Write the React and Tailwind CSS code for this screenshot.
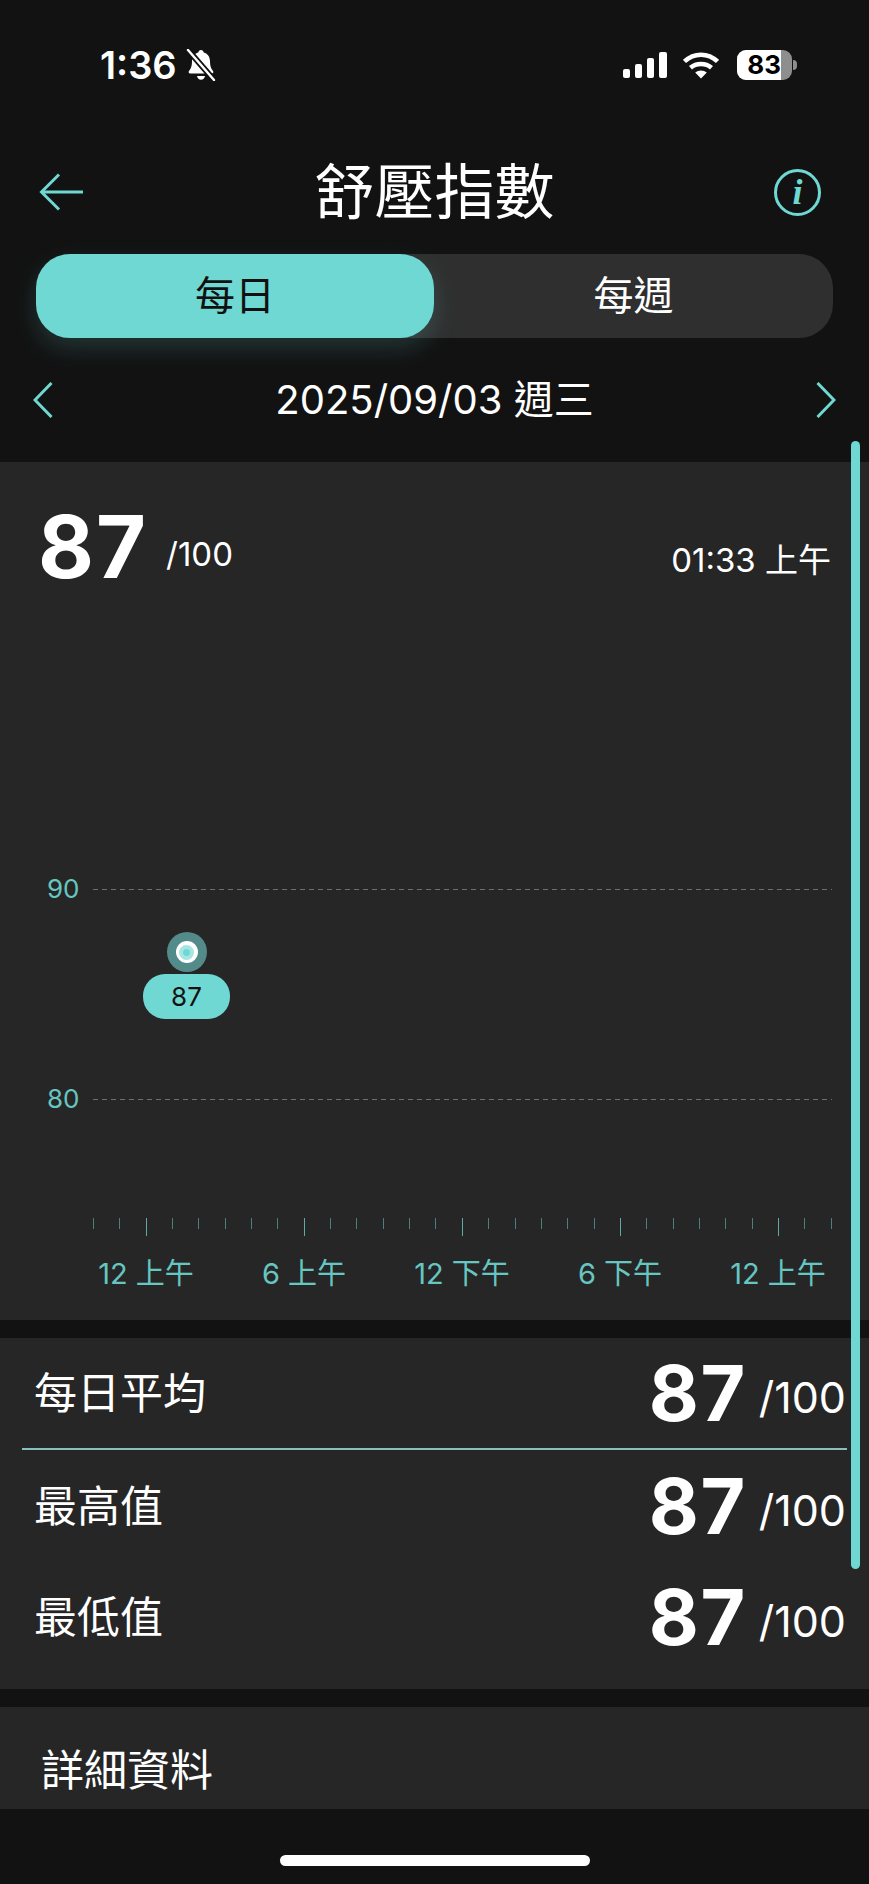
import React from "react";

const cjk = "font-['Inter','Noto_Sans_CJK_TC',sans-serif]";

// 29 ticks along the day axis, every sixth one is longer
const ticks = Array.from({ length: 29 }, (_, i) => i);
const hours = ["12 上午", "6 上午", "12 下午", "6 下午", "12 上午"];

const StatusBar = () => (
  <div className="h-[130px] flex items-center justify-between pl-[100px] pr-[72px] text-white">
    <div className="flex items-center gap-[9px]">
      <span className="text-[38px] font-semibold leading-none">1:36</span>
      <svg width="30" height="32" viewBox="0 0 30 32" fill="none">
        <path
          d="M15 1c1.5 0 2.5 1 2.7 2.4C22 4.600 24 8 24 12.500c0 4 .8 7 3 9.500.8 1 .2 2.500-1.200 2.500H4.200C2.800 24.500 2.200 23 3 22c2.200-2.500 3-5.500 3-9.500C6 8 8 4.600 12.300 3.400 12.500 2 13.500 1 15 1z"
          fill="#fff"
        />
        <path d="M11 27h8c-.4 2.300-2 3.800-4 3.800s-3.600-1.500-4-3.800z" fill="#fff" />
        <path d="M2 1l26 30" stroke="#121212" strokeWidth="6" />
        <path d="M2 1l26 30" stroke="#fff" strokeWidth="2.400" strokeLinecap="round" />
      </svg>
    </div>
    <div className="flex items-center gap-[16px]">
      <svg width="44" height="26" viewBox="0 0 44 26" fill="#fff">
        <rect x="0" y="17" width="7" height="9" rx="2" />
        <rect x="12" y="12" width="7" height="14" rx="2" />
        <rect x="24" y="6" width="7" height="20" rx="2" />
        <rect x="36" y="0" width="8" height="26" rx="2" />
      </svg>
      <svg width="36" height="27" viewBox="0 0 36 27" fill="none" stroke="#fff" strokeWidth="4.500">
        <path d="M1.500 9.500C11 .4 25 .4 34.500 9.500" />
        <path d="M7.500 15.800c5.800-5.200 15.200-5.200 21 0" />
        <path d="M18 26.500l-5.800-6c3.200-2.800 8.400-2.800 11.600 0z" fill="#fff" stroke="none" />
      </svg>
      <div className="ml-[2px] flex items-center gap-[1px]">
        <div className="w-[55px] h-[30px] rounded-[9px] flex bg-[#8e8e8e]">
          <div className="w-[44px] rounded-l-[9px] bg-white text-black text-[26px] font-bold leading-[30px] text-right font-['Inter',sans-serif]">
            83
          </div>
        </div>
        <div className="w-[4px] h-[10px] rounded-r-full bg-[#8e8e8e]" />
      </div>
    </div>
  </div>
);

const Header = () => (
  <div className="h-[124px] flex items-center justify-between pl-[39px] pr-[48px]">
    <svg width="44" height="38" viewBox="0 0 44 38" fill="none" stroke="#6fd8d2" strokeWidth="3">
      <path d="M20 1.500L2.500 19 20 36.500" />
      <path d="M2.500 19H44" />
    </svg>
    <h1 className="ml-[12px] text-[60px] text-white leading-none font-normal">舒壓指數</h1>
    <div className="w-[47px] h-[47px] rounded-full border-[3px] border-[#6fd8d2] flex items-center justify-center">
      <span className="text-[36px] leading-none font-bold italic text-[#6fd8d2] font-['Liberation_Serif',serif]">
        i
      </span>
    </div>
  </div>
);

const PeriodToggle = () => (
  <div className="mx-[36px] h-[84px] flex rounded-[34px] bg-[#2f2f2f] text-[40px]">
    <button className="w-[398px] rounded-[34px] bg-[#6fd8d2] text-[#111] shadow-[0_10px_24px_rgba(111,216,210,0.18)]">
      每日
    </button>
    <button className="flex-1 text-white">每週</button>
  </div>
);

const DateRow = () => (
  <div className="h-[124px] flex items-center justify-between pl-[33px] pr-[33px]">
    <svg width="20" height="36" viewBox="0 0 20 36" fill="none" stroke="#6fd8d2" strokeWidth="3">
      <path d="M18.500 1L2 18l16.500 17" />
    </svg>
    <span className="text-[40px] text-white leading-none">2025/09/03 週三</span>
    <svg width="20" height="36" viewBox="0 0 20 36" fill="none" stroke="#6fd8d2" strokeWidth="3">
      <path d="M1.500 1L18 18 1.500 35" />
    </svg>
  </div>
);

const GridLine = ({ label }) => (
  <div className="h-[30px] flex items-center">
    <span className="w-[93px] pl-[47px] text-[26px] leading-none text-[#66c6c1]">{label}</span>
    <div className="w-[739px] h-px bg-[repeating-linear-gradient(90deg,#6e6e6e_0_5px,transparent_5px_9px)]" />
  </div>
);

const DayChart = () => (
  <section className="h-[858px] bg-[#262626] flex flex-col">
    <div className="h-[412px] flex items-start pl-[38px] pr-[38px] text-white">
      <span className="mt-[37px] text-[86px] tracking-[2px] leading-[96px] font-bold">87</span>
      <span className="mt-[76px] ml-[18px] text-[33px] leading-none">/100</span>
      <span className="mt-[82px] ml-auto text-[33px] leading-none">01:33 上午</span>
    </div>
    <div className="relative h-[240px] flex flex-col justify-between">
      <GridLine label="90" />
      <GridLine label="80" />
      {/* the single reading, plotted over the grid */}
      <div className="absolute left-[143px] top-[58px] w-[87px] flex flex-col items-center">
        <div className="w-[40px] h-[40px] rounded-full bg-[#528b89] flex items-center justify-center">
          <div className="w-[22px] h-[22px] rounded-full bg-white flex items-center justify-center">
            <div className="w-[15px] h-[15px] rounded-full bg-[#a5e6e2] flex items-center justify-center">
              <div className="w-[7px] h-[7px] rounded-full bg-[#6fd8d2]" />
            </div>
          </div>
        </div>
        <div className="mt-[2px] w-[87px] h-[45px] rounded-[22px] bg-[#6fd8d2] text-[#111] text-[26px] flex items-center justify-center">
          87
        </div>
      </div>
    </div>
    <div className="mt-[104px] ml-[93px] w-[739px] h-[18px] flex justify-between items-start">
      {ticks.map((i) => (
        <div
          key={i}
          className={i % 6 === 2 ? "w-px h-[18px] bg-[#5fa9a6]" : "w-px h-[11px] bg-[#4f7f7d]"}
        />
      ))}
    </div>
    <div className="mt-[23px] pl-[67px] flex text-[29px] leading-none text-[#66c6c1]">
      {hours.map((h, i) => (
        <span key={i} className="w-[158px] text-center whitespace-nowrap">
          {h}
        </span>
      ))}
    </div>
  </section>
);

const StatRow = ({ label, className }) => (
  <div className={`flex items-center justify-between pl-[34px] pr-[23px] text-white ${className}`}>
    <span className="text-[43px] leading-none">{label}</span>
    <div className="flex items-center">
      <span className="text-[77px] tracking-[1.500px] leading-none font-bold">87</span>
      <span className="ml-[12px] mt-[8px] text-[43px] leading-none">/100</span>
    </div>
  </div>
);

const Stats = () => (
  <section className="mt-[18px] h-[351px] bg-[#262626]">
    <StatRow label="每日平均" className="h-[110px]" />
    <div className="mx-[22px] h-[2px] bg-[#86bfbc]" />
    <StatRow label="最高值" className="h-[112px]" />
    <StatRow label="最低值" className="h-[110px]" />
  </section>
);

const App = () => {
  return (
    <div className={`relative w-[869px] h-[1884px] overflow-hidden bg-[#121212] ${cjk}`}>
      <StatusBar />
      <Header />
      <PeriodToggle />
      <DateRow />
      <DayChart />
      <Stats />
      <section className="mt-[18px] h-[102px] bg-[#262626] pl-[41px] pt-[42px] text-[43px] leading-none text-white">
        詳細資料
      </section>
      <div className="mt-[46px] mx-auto w-[310px] h-[11px] rounded-full bg-white" />
      {/* scrollbar */}
      <div className="absolute left-[851px] top-[441px] w-[9px] h-[1128px] rounded-full bg-[#6fd8d2]" />
    </div>
  );
};

export default App;
